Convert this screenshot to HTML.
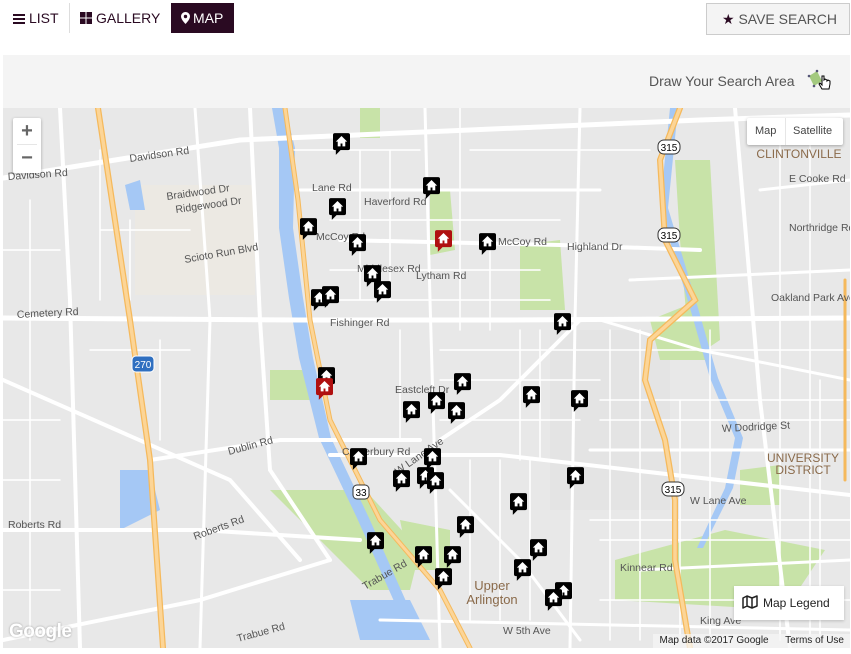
<!DOCTYPE html>
<html><head><meta charset="utf-8"><style>
*{box-sizing:border-box;margin:0;padding:0}
body{width:851px;height:654px;background:#fff;font-family:"Liberation Sans",sans-serif;position:relative;overflow:hidden}
.tab{position:absolute;top:3px;height:30px;line-height:30px;font-size:14px;color:#2a0a22}
.map{position:absolute;left:3px;top:108px;width:847px;height:540px;overflow:hidden;background:#e8e8e8}
.lbl{font-family:"Liberation Sans",sans-serif;font-size:10.5px;fill:#555}
</style></head><body>
<div class="tab" style="left:13px"><span style="display:inline-block;width:12px;height:10px;border-top:2px solid #2a0a22;border-bottom:2px solid #2a0a22;position:relative;top:1px;margin-right:4px;background:linear-gradient(#2a0a22,#2a0a22) 0 2px/12px 2px no-repeat"></span>LIST</div>
<div style="position:absolute;left:69px;top:3px;width:1px;height:30px;background:#ddd"></div>
<div class="tab" style="left:80px"><svg width="12" height="12" style="vertical-align:-1px;margin-right:4px"><rect x="0" y="0" width="5.5" height="5.5" fill="#2a0a22"/><rect x="6.5" y="0" width="5.5" height="5.5" fill="#2a0a22"/><rect x="0" y="6.5" width="5.5" height="5.5" fill="#2a0a22"/><rect x="6.5" y="6.5" width="5.5" height="5.5" fill="#2a0a22"/></svg>GALLERY</div>
<div class="tab" style="left:171px;width:63px;background:#2a0a22;color:#fff;padding-left:10px"><svg width="9" height="12" style="vertical-align:-1px;margin-right:3px"><path d="M4.5 0C2 0 0 2 0 4.5 0 7.5 4.5 12 4.5 12S9 7.5 9 4.5C9 2 7 0 4.5 0z" fill="#fff"/><circle cx="4.5" cy="4.5" r="1.7" fill="#2a0a22"/></svg>MAP</div>
<div style="position:absolute;left:706px;top:3px;width:144px;height:32px;border:1px solid #ccc;background:#f4f4f4;font-size:14px;color:#555;line-height:30px;padding-left:15px"><span style="color:#2a0a22">★</span> SAVE SEARCH</div>
<div style="position:absolute;left:3px;top:55px;width:847px;height:53px;background:#f4f4f4"></div>
<div style="position:absolute;left:649px;top:73px;font-size:14px;color:#555">Draw Your Search Area</div>
<svg style="position:absolute;left:806px;top:68px" width="30" height="28"><polygon points="3,8 11,3 16,13 8,18" fill="#a3c97f"/><circle cx="3" cy="8" r="1.3" fill="#557"/><circle cx="11" cy="3" r="1.3" fill="#557"/><circle cx="8" cy="18" r="1.3" fill="#557"/><path d="M16 8v9l-2-2-1 1 3 5h7l1-5v-3l-2-1-1 1v-1l-2-1-1 1V8z" fill="#fff" stroke="#000" stroke-width="1"/></svg>

<div class="map">
<svg width="847" height="540" viewBox="3 108 847 540" style="position:absolute;left:0;top:0">
<defs>
<symbol id="m" viewBox="0 0 18 24"><path d="M2 0h14a2 2 0 0 1 2 2v14a2 2 0 0 1-2 2H8l-5 5v-5H2a2 2 0 0 1-2-2V2a2 2 0 0 1 2-2z"/><path d="M9 3l-6 6h2v5h3v-3h2v3h3V9h2z" fill="#fff"/></symbol>
</defs>
<rect x="3" y="108" width="847" height="540" fill="#e8e8e8"/>
<rect x="135" y="185" width="120" height="110" fill="#ece9e3"/>
<rect x="550" y="330" width="120" height="180" fill="#e4e4e4"/>
<path d="M430 190l20 0 5 60-25 5z" fill="#c8e3a8"/>
<path d="M520 245l40-5 5 70-45 0z" fill="#c8e3a8"/>
<path d="M270 490l95 0 55 60-10 40-40 0z" fill="#c8e3a8"/>
<path d="M615 560l110-30 100 20-40 60-170-10z" fill="#c8e3a8"/>
<path d="M675 160l35 0 10 180-30 20-10-120z" fill="#c8e3a8"/>
<path d="M650 320l50 -20 10 60-50 0z" fill="#c8e3a8"/>
<path d="M740 470l40-5 0 40-40 0z" fill="#c8e3a8"/>
<path d="M360 108l20 0 0 30-20 0z" fill="#c8e3a8"/>
<path d="M270 370l40 0 0 30-40 0z" fill="#c8e3a8"/>
<path d="M400 520l50 10 0 40-40 0z" fill="#c8e3a8"/>
<path d="M272 108l13 0 10 40 -2 80 10 70 10 60 18 80 38 80 40 90 20 30 -12 0 -20-30 -40-90 -38-80 -20-80 -10-60 -10-70 0-80z" fill="#a5c8f5"/>
<path d="M670 108l8 0 -10 100 30 100 20 70 25 60 -10 50 -30 60 -6 0 28-60 10-50 -25-60 -20-70 -30-100z" fill="#a5c8f5"/>
<path d="M120 470l30 0 10 40-40 20z" fill="#a5c8f5"/>
<path d="M125 185l15-5 5 30-15 0z" fill="#a5c8f5"/>
<path d="M350 600l60 0 20 40-70 0z" fill="#a5c8f5"/>
<g fill="none" stroke="#fff" stroke-linecap="round">
<path d="M3 178L240 140 700 120 850 115" stroke-width="5"/>
<path d="M3 318L300 320 500 320 850 318" stroke-width="5"/>
<path d="M3 530L200 530 360 540" stroke-width="4"/>
<path d="M150 460L280 440 420 440" stroke-width="4"/>
<path d="M330 455L500 455 850 495" stroke-width="4"/>
<path d="M3 640L200 600 330 560" stroke-width="4"/>
<path d="M250 108L260 320 270 470 330 560" stroke-width="4"/>
<path d="M60 108L70 300 80 648" stroke-width="4"/>
<path d="M195 108L210 320 200 648" stroke-width="3"/>
<path d="M425 108L430 300 440 648" stroke-width="3"/>
<path d="M580 108L575 320 570 648" stroke-width="3"/>
<path d="M735 108L760 400 790 648" stroke-width="4"/>
<path d="M3 380L230 480 300 560" stroke-width="4"/>
<path d="M600 320L700 350 850 380" stroke-width="3"/>
<path d="M440 440L500 400 580 320" stroke-width="4"/>
<path d="M450 490L520 560 580 640" stroke-width="3"/>
<path d="M630 280L850 270" stroke-width="3"/>
<path d="M340 240L560 245 700 250" stroke-width="4"/>
<path d="M300 190L600 190" stroke-width="3"/>
<path d="M590 450L850 450" stroke-width="3"/>
<path d="M380 620L850 630" stroke-width="3"/>
<path d="M640 570L850 560" stroke-width="3"/>
<path d="M760 190L850 180" stroke-width="3"/>
<g stroke-width="1.5">
<path d="M330 220H560M330 270H540M330 300H550M440 350H850M440 380H600M440 420H580M600 400H850M600 420H850M590 520H850M600 540H850M600 600H850M3 250H60M3 420H60M3 480H60M3 590H60M90 350H190M100 230H190M290 150H420M470 150H650"/>
<path d="M360 150V300M390 150V300M460 108V330M490 250V330M520 330V460M540 330V460M610 330V640M640 330V640M680 400V640M710 330V640M780 130V640M810 130V640M100 150V300M130 220V300M160 340V440M30 200V640M400 330V440M470 460V620M500 460V620M530 460V620M820 380V640"/>
</g>
</g>
<g fill="none" stroke="#f5b95c" stroke-linecap="round">
<path d="M98 108L130 320 150 460 163 648" stroke-width="6"/>
<path d="M98 108L130 320 150 460 163 648" stroke="#fcd597" stroke-width="3.5"/>
<path d="M285 108L298 200 310 320 330 420 380 520 440 590 470 648" stroke-width="5"/>
<path d="M285 108L298 200 310 320 330 420 380 520 440 590 470 648" stroke="#fcd597" stroke-width="3"/>
<path d="M680 108L660 160 665 240 695 300 650 340 645 380 665 440 675 500 675 560 690 648" stroke-width="6"/>
<path d="M680 108L660 160 665 240 695 300 650 340 645 380 665 440 675 500 675 560 690 648" stroke="#fcd597" stroke-width="3.5"/>
<path d="M845 280V480" stroke-width="3"/>
</g>
<g font-family="Liberation Sans" font-size="10" text-anchor="middle">
<rect x="132" y="356" width="22" height="16" rx="4" fill="#2f6fc0" stroke="#fff"/><text x="143" y="368" fill="#fff">270</text>
<rect x="658" y="140" width="22" height="14" rx="6" fill="#fff" stroke="#333"/><text x="669" y="151">315</text>
<rect x="658" y="228" width="22" height="14" rx="6" fill="#fff" stroke="#333"/><text x="669" y="239">315</text>
<rect x="662" y="482" width="22" height="14" rx="6" fill="#fff" stroke="#333"/><text x="673" y="493">315</text>
<rect x="353" y="485" width="16" height="14" rx="4" fill="#fff" stroke="#333"/><text x="361" y="496">33</text>
</g>
<g class="lbl">
<text x="130" y="162" transform="rotate(-8 130 162)">Davidson Rd</text>
<text x="8" y="180" transform="rotate(-4 8 180)">Davidson Rd</text>
<text x="312" y="191">Lane Rd</text>
<text x="364" y="205">Haverford Rd</text>
<text x="316" y="240">McCoy Rd</text>
<text x="498" y="245">McCoy Rd</text>
<text x="567" y="250">Highland Dr</text>
<text x="357" y="272">Middlesex Rd</text>
<text x="416" y="279">Lytham Rd</text>
<text x="330" y="326">Fishinger Rd</text>
<text x="17" y="318" transform="rotate(-3 17 318)">Cemetery Rd</text>
<text x="167" y="200" transform="rotate(-8 167 200)">Braidwood Dr</text>
<text x="176" y="213" transform="rotate(-8 176 213)">Ridgewood Dr</text>
<text x="185" y="263" transform="rotate(-10 185 263)">Scioto Run Blvd</text>
<text x="395" y="393">Eastcleft Dr</text>
<text x="342" y="455">Canterbury Rd</text>
<text x="229" y="455" transform="rotate(-15 229 455)">Dublin Rd</text>
<text x="8" y="528">Roberts Rd</text>
<text x="195" y="540" transform="rotate(-20 195 540)">Roberts Rd</text>
<text x="365" y="590" transform="rotate(-30 365 590)">Trabue Rd</text>
<text x="238" y="642" transform="rotate(-15 238 642)">Trabue Rd</text>
<text x="620" y="571">Kinnear Rd</text>
<text x="700" y="624">King Ave</text>
<text x="503" y="634">W 5th Ave</text>
<text x="690" y="504">W Lane Ave</text>
<text x="722" y="432" transform="rotate(-3 722 432)">W Dodridge St</text>
<text x="789" y="182">E Cooke Rd</text>
<text x="789" y="231">Northridge Rd</text>
<text x="771" y="301">Oakland Park Ave</text>
<text x="398" y="475" transform="rotate(-35 398 475)">W Lane Ave</text>
</g>
<g font-family="Liberation Sans" font-size="12" fill="#8a6a4a" text-anchor="middle">
<text x="799" y="158">CLINTONVILLE</text>
<text x="803" y="462">UNIVERSITY</text><text x="803" y="474">DISTRICT</text>
<text x="492" y="590" font-size="13">Upper</text><text x="492" y="604" font-size="13">Arlington</text>
</g>
<g fill="#000">
<use href="#m" x="333" y="133" width="17" height="23"/>
<use href="#m" x="423" y="177" width="17" height="23"/>
<use href="#m" x="329" y="198" width="17" height="23"/>
<use href="#m" x="300" y="218" width="17" height="23"/>
<use href="#m" x="349" y="234" width="17" height="23"/>
<use href="#m" x="435" y="230" width="17" height="23" fill="#b01010"/>
<use href="#m" x="479" y="233" width="17" height="23"/>
<use href="#m" x="364" y="265" width="17" height="23"/>
<use href="#m" x="374" y="281" width="17" height="23"/>
<use href="#m" x="311" y="289" width="17" height="23"/>
<use href="#m" x="322" y="286" width="17" height="23"/>
<use href="#m" x="554" y="313" width="17" height="23"/>
<use href="#m" x="318" y="367" width="17" height="23"/>
<use href="#m" x="316" y="378" width="17" height="23" fill="#b01010"/>
<use href="#m" x="454" y="373" width="17" height="23"/>
<use href="#m" x="428" y="392" width="17" height="23"/>
<use href="#m" x="403" y="401" width="17" height="23"/>
<use href="#m" x="448" y="402" width="17" height="23"/>
<use href="#m" x="523" y="386" width="17" height="23"/>
<use href="#m" x="571" y="390" width="17" height="23"/>
<use href="#m" x="350" y="448" width="17" height="23"/>
<use href="#m" x="424" y="448" width="17" height="23"/>
<use href="#m" x="393" y="470" width="17" height="23"/>
<use href="#m" x="417" y="467" width="17" height="23"/>
<use href="#m" x="427" y="472" width="17" height="23"/>
<use href="#m" x="567" y="467" width="17" height="23"/>
<use href="#m" x="510" y="493" width="17" height="23"/>
<use href="#m" x="457" y="516" width="17" height="23"/>
<use href="#m" x="367" y="532" width="17" height="23"/>
<use href="#m" x="415" y="546" width="17" height="23"/>
<use href="#m" x="444" y="546" width="17" height="23"/>
<use href="#m" x="530" y="539" width="17" height="23"/>
<use href="#m" x="514" y="559" width="17" height="23"/>
<use href="#m" x="435" y="568" width="17" height="23"/>
<use href="#m" x="555" y="582" width="17" height="23"/>
<use href="#m" x="545" y="589" width="17" height="23"/>
</g>
</svg>
<div style="position:absolute;left:10px;top:10px;width:28px;height:55px;background:#fff;border-radius:2px;box-shadow:0 1px 3px rgba(0,0,0,.3);text-align:center;color:#666;font-size:20px;line-height:26px"><div style="border-bottom:1px solid #e6e6e6;margin:0 4px;font-weight:bold">+</div><div style="font-weight:bold">−</div></div>
<div style="position:absolute;left:744px;top:10px;width:96px;height:27px;background:#fff;box-shadow:0 1px 3px rgba(0,0,0,.3);border-radius:2px;font-size:11px;color:#444;line-height:27px"><span style="position:absolute;left:8px">Map</span><span style="position:absolute;left:38px;top:0;width:1px;height:27px;background:#e6e6e6"></span><span style="position:absolute;left:46px">Satellite</span></div>
<div style="position:absolute;left:731px;top:478px;width:110px;height:34px;background:#fff;box-shadow:0 1px 3px rgba(0,0,0,.2);font-size:12px;color:#222;line-height:34px;padding-left:8px"><svg width="16" height="14" style="vertical-align:-2px;margin-right:5px"><path d="M1 3l4-2 5 2 5-2v10l-5 2-5-2-4 2z M5 1v10 M10 3v10" fill="none" stroke="#222" stroke-width="1.5" stroke-linejoin="round"/></svg>Map Legend</div>
<div style="position:absolute;left:6px;top:513px;font-size:19px;font-weight:bold;color:#fff;letter-spacing:-0.5px;text-shadow:0 0 2px rgba(0,0,0,.35)">Google</div>
<div style="position:absolute;right:0;bottom:0;height:14px;background:rgba(245,245,245,.75);font-size:10px;color:#222;line-height:14px;padding:0 6px">Map data ©2017 Google &nbsp;&nbsp;&nbsp;&nbsp; Terms of Use</div>
</div>
</body></html>
